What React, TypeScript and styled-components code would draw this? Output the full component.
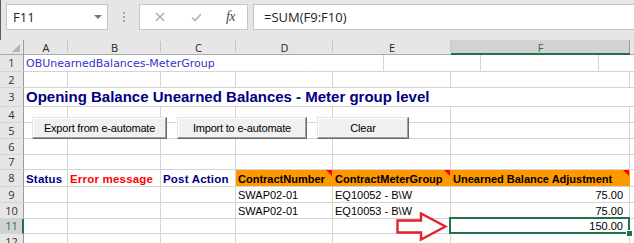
import React from "react";
import styled, { createGlobalStyle } from "styled-components";

const GlobalStyle = createGlobalStyle`
  html, body {
    margin: 0;
    padding: 0;
    background: #ffffff;
  }
  body {
    overflow: hidden;
    font-family: "Liberation Sans", Arial, sans-serif;
  }
`;

const green = "#217346";
const gridLine = "#d4d4d4";
const headerBg = "#e6e6e6";
const activeBg = "#d2d2d2";
const orange = "#ff9900";

type Kind = "tag" | "title" | "label" | "head" | "data" | "num";

interface Spec {
  text?: string;
  kind?: Kind;
  tone?: string;
  open?: boolean;
  fill?: string;
  note?: boolean;
  selected?: boolean;
}

interface RowSpec {
  n: number;
  h: number;
  cells?: Record<number, Spec>;
}

// row head + A..G
const colWidths = [24, 44, 93, 75, 97, 118, 179, 30];
const colNames = ["", "A", "B", "C", "D", "E", "F", ""];
const activeCol = 6;
const activeRow = 11;

const rows: RowSpec[] = [
  { n: 1, h: 17, cells: { 1: { kind: "tag", text: "OBUnearnedBalances-MeterGroup", open: true }, 2: { open: true } } },
  { n: 2, h: 16 },
  {
    n: 3,
    h: 19,
    cells: {
      1: { kind: "title", text: "Opening Balance Unearned Balances - Meter group level", open: true },
      2: { open: true },
      3: { open: true },
      4: { open: true },
    },
  },
  { n: 4, h: 16 },
  { n: 5, h: 16 },
  { n: 6, h: 16 },
  { n: 7, h: 15 },
  {
    n: 8,
    h: 17,
    cells: {
      1: { kind: "label", text: "Status", tone: "#000080" },
      2: { kind: "label", text: "Error message", tone: "#ff0000" },
      3: { kind: "label", text: "Post Action", tone: "#000080" },
      4: { kind: "head", text: "ContractNumber", fill: orange, note: true },
      5: { kind: "head", text: "ContractMeterGroup", fill: orange, note: true },
      6: { kind: "head", text: "Unearned Balance Adjustment", fill: orange, note: true },
    },
  },
  {
    n: 9,
    h: 16,
    cells: {
      4: { kind: "data", text: "SWAP02-01" },
      5: { kind: "data", text: "EQ10052 - B\\W" },
      6: { kind: "num", text: "75.00" },
    },
  },
  {
    n: 10,
    h: 16,
    cells: {
      4: { kind: "data", text: "SWAP02-01" },
      5: { kind: "data", text: "EQ10053 - B\\W" },
      6: { kind: "num", text: "75.00" },
    },
  },
  { n: 11, h: 15, cells: { 6: { kind: "num", text: "150.00", selected: true } } },
  { n: 12, h: 16 },
];

const Frame = styled.div`
  position: relative;
  width: 634px;
  height: 243px;
  overflow: hidden;
  background: #ffffff;
`;

/* ---------- formula bar ---------- */

const FormulaBar = styled.div`
  height: 40px;
  box-sizing: border-box;
  background: ${headerBg};
  border-left: 1px solid #5c5c5c;
  display: flex;
  align-items: flex-start;
  padding: 4px 0 0 5px;
`;

const NameBox = styled.div`
  width: 102px;
  height: 26px;
  box-sizing: border-box;
  background: #ffffff;
  border: 1px solid #c6c6c6;
  display: flex;
  align-items: center;
  justify-content: space-between;
  padding: 0 5px 0 6px;
  font-family: "Open Sans", "Liberation Sans", sans-serif;
  font-size: 13px;
  color: #222222;
`;

const DropCaret = styled.span`
  width: 0;
  height: 0;
  border-left: 4px solid transparent;
  border-right: 4px solid transparent;
  border-top: 4px solid #767676;
`;

const Grip = styled.div`
  width: 31px;
  height: 26px;
  display: flex;
  flex-direction: column;
  align-items: center;
  justify-content: center;
  gap: 2px;
`;

const GripDot = styled.span`
  width: 2px;
  height: 2px;
  background: #a6a6a6;
`;

const FxBox = styled.div`
  width: 109px;
  height: 26px;
  box-sizing: border-box;
  background: #ffffff;
  border: 1px solid #c6c6c6;
  display: grid;
  grid-template-columns: 39px 35px 1fr;
  align-items: center;
  justify-items: center;
`;

const FxLabel = styled.span`
  font-family: "Liberation Serif", "DejaVu Serif", serif;
  font-style: italic;
  font-size: 14px;
  color: #4a4a4a;
  letter-spacing: -0.5px;
`;

const FormulaInput = styled.div`
  flex: 1;
  margin-left: 5px;
  margin-right: -4px;
  height: 26px;
  box-sizing: border-box;
  background: #ffffff;
  border: 1px solid #c6c6c6;
  display: flex;
  align-items: center;
  padding-left: 10px;
  font-family: "Open Sans", "Liberation Sans", sans-serif;
  font-size: 13px;
  color: #222222;
`;

/* ---------- sheet ---------- */

const Sheet = styled.div`
  position: relative;
  display: flex;
  flex-direction: column;
`;

const Row = styled.div<{ $h: number }>`
  display: flex;
  height: ${(p) => p.$h}px;
  flex: 0 0 ${(p) => p.$h}px;
`;

const ColHead = styled.div<{ $w: number; $active?: boolean }>`
  position: relative;
  flex: 0 0 ${(p) => p.$w}px;
  box-sizing: border-box;
  background: ${(p) => (p.$active ? activeBg : headerBg)};
  border-bottom: ${(p) => (p.$active ? `2px solid ${green}` : "1px solid #ababab")};
  display: flex;
  align-items: center;
  justify-content: center;
  font-family: "Open Sans", "Liberation Sans", sans-serif;
  font-size: 11px;
  color: ${(p) => (p.$active ? green : "#262626")};
  padding-top: ${(p) => (p.$active ? "1px" : "0")};

  &::after {
    content: "";
    position: absolute;
    right: 0;
    top: ${(p) => (p.$active ? "0" : "1px")};
    bottom: ${(p) => (p.$active ? "0" : "2px")};
    width: 1px;
    background: ${(p) => (p.$active ? "#9b9b9b" : "#c4c4c4")};
  }
`;

const Corner = styled.div<{ $w: number }>`
  position: relative;
  flex: 0 0 ${(p) => p.$w}px;
  box-sizing: border-box;
  background: ${headerBg};
  border-right: 1px solid #9b9b9b;
  border-bottom: 1px solid #ababab;

  &::after {
    content: "";
    position: absolute;
    right: 3px;
    bottom: 2px;
    width: 0;
    height: 0;
    border-left: 8px solid transparent;
    border-bottom: 8px solid #b5b5b5;
  }
`;

const RowHead = styled.div<{ $w: number; $active?: boolean }>`
  flex: 0 0 ${(p) => p.$w}px;
  box-sizing: border-box;
  background: ${(p) => (p.$active ? activeBg : headerBg)};
  border-right: ${(p) => (p.$active ? `2px solid ${green}` : "1px solid #9b9b9b")};
  border-bottom: 1px solid ${gridLine};
  display: flex;
  align-items: center;
  justify-content: center;
  padding-left: ${(p) => (p.$active ? "1px" : "0")};
  font-family: "Open Sans", "Liberation Sans", sans-serif;
  font-size: 11px;
  line-height: 14px;
  color: ${(p) => (p.$active ? green : "#333333")};
`;

const Cell = styled.div<{
  $w: number;
  $fill?: string;
  $open?: boolean;
  $right?: boolean;
  $selected?: boolean;
  $note?: boolean;
}>`
  position: relative;
  flex: 0 0 ${(p) => p.$w}px;
  box-sizing: border-box;
  background: ${(p) => p.$fill ?? "transparent"};
  border-right: 1px solid ${(p) => (p.$open ? "transparent" : p.$fill ?? gridLine)};
  border-bottom: 1px solid ${gridLine};
  display: flex;
  align-items: flex-end;
  justify-content: ${(p) => (p.$right ? "flex-end" : "flex-start")};
  padding: ${(p) => (p.$right ? "0 6px 0 0" : "0 0 0 2px")};
  white-space: nowrap;
  z-index: ${(p) => (p.$selected ? 2 : "auto")};

  ${(p) =>
    p.$note &&
    `
    &::before {
      content: "";
      position: absolute;
      top: 0;
      right: 0;
      width: 0;
      height: 0;
      border-left: 6px solid transparent;
      border-top: 6px solid #ff0000;
    }
  `}

  ${(p) =>
    p.$selected &&
    `
    &::after {
      content: "";
      position: absolute;
      left: -2px;
      top: -2px;
      right: -1px;
      bottom: -1px;
      border: 2px solid ${green};
      pointer-events: none;
    }
    &::before {
      content: "";
      position: absolute;
      right: -4px;
      bottom: -4px;
      width: 5px;
      height: 5px;
      background: ${green};
      border: 1px solid #ffffff;
      z-index: 3;
    }
  `}
`;

const Tagline = styled.span`
  font-family: "DejaVu Sans", Tahoma, sans-serif;
  font-size: 11px;
  line-height: 14px;
  color: #3333cc;
`;

const Title = styled.span`
  font-family: "Liberation Sans", Arial, sans-serif;
  font-weight: bold;
  font-size: 15px;
  line-height: 18px;
  color: #000080;
`;

const Label = styled.span<{ $tone: string }>`
  font-family: "Liberation Sans", Arial, sans-serif;
  font-weight: bold;
  font-size: 11.5px;
  line-height: 14px;
  letter-spacing: 0.2px;
  color: ${(p) => p.$tone};
`;

const HeadText = styled.span`
  font-family: "Liberation Sans", Arial, sans-serif;
  font-weight: bold;
  font-size: 11px;
  line-height: 14px;
  color: #000000;
`;

const DataText = styled.span`
  font-family: "Liberation Sans", Arial, sans-serif;
  font-size: 11px;
  line-height: 14px;
  color: #000000;
`;

/* ---------- overlays ---------- */

const ButtonBar = styled.div`
  position: absolute;
  left: 32px;
  top: 77px;
  display: flex;
  gap: 10px;
`;

const SheetButton = styled.button<{ $w: number }>`
  width: ${(p) => p.$w}px;
  height: 22px;
  box-sizing: border-box;
  margin: 0;
  padding: 0;
  background: #f0f0f0;
  border: 1px solid;
  border-color: #e3e3e3 #696969 #696969 #e3e3e3;
  box-shadow: inset -1px -1px 0 #a0a0a0, inset 1px 1px 0 #ffffff;
  font-family: "Liberation Sans", Arial, sans-serif;
  font-size: 11px;
  letter-spacing: -0.2px;
  color: #000000;
`;

const Arrow = styled.svg`
  position: absolute;
  left: 396px;
  top: 172px;
`;

function renderText(spec: Spec) {
  if (!spec.text) return null;
  switch (spec.kind) {
    case "tag":
      return <Tagline>{spec.text}</Tagline>;
    case "title":
      return <Title>{spec.text}</Title>;
    case "label":
      return <Label $tone={spec.tone ?? "#000080"}>{spec.text}</Label>;
    case "head":
      return <HeadText>{spec.text}</HeadText>;
    default:
      return <DataText>{spec.text}</DataText>;
  }
}

const XIcon = () => (
  <svg width="10" height="10" viewBox="0 0 10 10">
    <path d="M1 1 L9 9 M9 1 L1 9" stroke="#a8a8a8" strokeWidth="1.3" fill="none" />
  </svg>
);

const CheckIcon = () => (
  <svg width="11" height="9" viewBox="0 0 11 9">
    <path d="M1 4.5 L4 7.5 L10 1" stroke="#b4b4b4" strokeWidth="1.6" fill="none" />
  </svg>
);

export default function App() {
  return (
    <>
      <GlobalStyle />
      <Frame>
        <FormulaBar>
          <NameBox>
            F11
            <DropCaret />
          </NameBox>
          <Grip>
            <GripDot />
            <GripDot />
            <GripDot />
          </Grip>
          <FxBox>
            <XIcon />
            <CheckIcon />
            <FxLabel>fx</FxLabel>
          </FxBox>
          <FormulaInput>=SUM(F9:F10)</FormulaInput>
        </FormulaBar>

        <Sheet>
          <Row $h={15}>
            <Corner $w={colWidths[0]} />
            {colNames.slice(1).map((name, i) => (
              <ColHead key={i} $w={colWidths[i + 1]} $active={i + 1 === activeCol}>
                {name}
              </ColHead>
            ))}
          </Row>

          {rows.map((row) => (
            <Row key={row.n} $h={row.h}>
              <RowHead $w={colWidths[0]} $active={row.n === activeRow}>
                {row.n}
              </RowHead>
              {colWidths.slice(1).map((w, i) => {
                const spec = row.cells?.[i + 1] ?? {};
                return (
                  <Cell
                    key={i}
                    $w={w}
                    $fill={spec.fill}
                    $open={spec.open}
                    $right={spec.kind === "num"}
                    $note={spec.note}
                    $selected={spec.selected}
                  >
                    {renderText(spec)}
                  </Cell>
                );
              })}
            </Row>
          ))}

          <ButtonBar>
            <SheetButton $w={135}>Export from e-automate</SheetButton>
            <SheetButton $w={130}>Import to e-automate</SheetButton>
            <SheetButton $w={92}>Clear</SheetButton>
          </ButtonBar>

          <Arrow width="52" height="30" viewBox="0 0 52 30">
            <polygon
              points="1.5,8.5 25,8.5 25,1.5 49.5,14.5 25,27.5 25,20.5 1.5,20.5"
              fill="#ffffff"
              stroke="#e4222b"
              strokeWidth="2.4"
              strokeLinejoin="miter"
            />
          </Arrow>
        </Sheet>
      </Frame>
    </>
  );
}
